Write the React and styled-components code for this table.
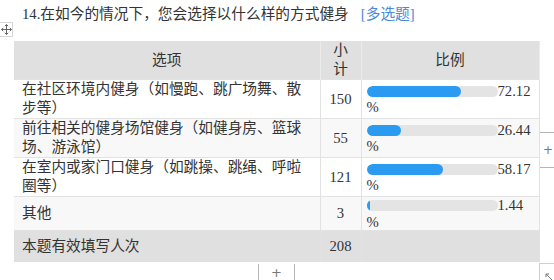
import React from 'react';
import styled, { createGlobalStyle } from 'styled-components';

const GlobalStyle = createGlobalStyle`
  body {
    margin: 0;
    background: #fff;
    font-family: "Liberation Serif", "Noto Sans CJK SC", serif;
    color: #333;
  }
`;

const Page = styled.div`
  width: 554px;
  height: 280px;
  overflow: hidden;
  position: relative;
`;

const Title = styled.div`
  margin: 4px 0 0 22px;
  font-size: 14.7px;
  line-height: 20px;
  color: #333;
  white-space: nowrap;
`;

const Tag = styled.span`
  margin-left: 12px;
  color: #4a88dc;
`;

const TableWrap = styled.div`
  position: relative;
  margin: 17px 0 0 14px;
  width: 525px;
`;

const Table = styled.table`
  width: 525px;
  table-layout: fixed;
  border-collapse: collapse;
  font-size: 14.7px;
`;

const HeadCell = styled.th`
  background: #e0e0e0;
  border-left: 1px solid #ebebeb;
  border-right: 1px solid #ebebeb;
  font-weight: normal;
  text-align: center;
  line-height: 19px;
  padding: 0 8px;
  height: 38px;
  color: #333;
  &:first-child { border-left: none; }
`;

const Row = styled.tr`
  background: ${p => (p.$total ? '#e0e0e0' : p.$striped ? '#f8f8f8' : '#fff')};
  border-top: 1px solid #e2e2e2;
`;

const Cell = styled.td`
  border-left: 1px solid #e2e2e2;
  border-right: 1px solid #e2e2e2;
  padding: ${p => (p.$bar ? '0 5px' : '0 8px')};
  text-align: ${p => (p.$center ? 'center' : 'left')};
  vertical-align: middle;
  line-height: 19px;
  height: ${p => (p.$short ? '31px' : '33px')};
  color: #333;
  &:first-child { border-left: none; }
`;

const BarLine = styled.div`
  line-height: 16.5px;
  white-space: nowrap;
`;

const Track = styled.span`
  display: inline-block;
  width: 131px;
  height: 11px;
  border-radius: 6px;
  background: #e4e4e4;
  vertical-align: middle;
  overflow: hidden;
  margin-top: -2px;
`;

const Fill = styled.span`
  display: block;
  height: 100%;
  min-width: 3px;
  border-radius: 6px;
  background: #2a9bf0;
`;

const Pct = styled.div`
  line-height: 16.5px;
`;

const MoveHandle = styled.div`
  position: absolute;
  left: -14px;
  top: -19px;
  width: 12px;
  height: 13px;
  border: 1px solid #d6d6d6;
  border-left: none;
  background: #fff;
  display: flex;
  align-items: center;
  justify-content: center;
`;

const SideTab = styled.div`
  position: absolute;
  left: 526px;
  top: 91px;
  width: 14px;
  height: 36px;
  border-top: 1px solid #b5b5b5;
  border-bottom: 1px solid #b5b5b5;
  background: #fff;
  color: #777;
  font-size: 12px;
  line-height: 12px;
  font-family: "DejaVu Sans", sans-serif;
  display: flex;
  align-items: center;
  padding-left: 3px;
  box-sizing: border-box;
`;

const BottomTab = styled.div`
  position: absolute;
  left: 244px;
  top: 223px;
  width: 35px;
  height: 16px;
  border-left: 1px solid #b5b5b5;
  border-right: 1px solid #b5b5b5;
  color: #777;
  font-size: 13px;
  line-height: 13px;
  font-family: "DejaVu Sans", sans-serif;
  display: flex;
  align-items: center;
  justify-content: center;
`;

const Corner = styled.div`
  position: absolute;
  left: 525px;
  top: 222px;
  width: 15px;
  height: 17px;
  border-left: 1px solid #d0d0d0;
  border-top: 1px solid #d0d0d0;
  background: #fff;
  padding: 3px 0 0 5px;
  box-sizing: border-box;
`;

const rows = [
  { label: '在社区环境内健身（如慢跑、跳广场舞、散步等）', count: 150, pct: '72.12' },
  { label: '前往相关的健身场馆健身（如健身房、篮球场、游泳馆）', count: 55, pct: '26.44' },
  { label: '在室内或家门口健身（如跳操、跳绳、呼啦圈等）', count: 121, pct: '58.17' },
  { label: '其他', count: 3, pct: '1.44' },
];

function MoveIcon() {
  return (
    <svg width="11" height="11" viewBox="0 0 11 11" fill="none" stroke="#666" strokeWidth="1">
      <path d="M5.5 0.5v10M0.5 5.5h10" />
      <path d="M3.8 2.2L5.5 0.5 7.2 2.2M3.8 8.8L5.5 10.5 7.2 8.8M2.2 3.8L0.5 5.5 2.2 7.2M8.8 3.8L10.5 5.5 8.8 7.2" />
    </svg>
  );
}

function ResizeIcon() {
  return (
    <svg width="8" height="8" viewBox="0 0 8 8" fill="none" stroke="#777" strokeWidth="1">
      <path d="M1 1L7 7" />
      <path d="M1 4V1h3" />
    </svg>
  );
}

export default function App() {
  return (
    <Page>
      <GlobalStyle />
      <Title>
        14.在如今的情况下，您会选择以什么样的方式健身
        <Tag>[多选题]</Tag>
      </Title>

      <TableWrap>
        <MoveHandle>
          <MoveIcon />
        </MoveHandle>

        <Table>
          <colgroup>
            <col style={{ width: 306 }} />
            <col style={{ width: 41 }} />
            <col style={{ width: 178 }} />
          </colgroup>
          <thead>
            <tr>
              <HeadCell>选项</HeadCell>
              <HeadCell>小计</HeadCell>
              <HeadCell>比例</HeadCell>
            </tr>
          </thead>
          <tbody>
            {rows.map((r, i) => (
              <Row key={r.label} $striped={i % 2 === 1}>
                <Cell>{r.label}</Cell>
                <Cell $center>{r.count}</Cell>
                <Cell $bar>
                  <BarLine>
                    <Track>
                      <Fill style={{ width: `${r.pct}%` }} />
                    </Track>
                    {r.pct}
                  </BarLine>
                  <Pct>%</Pct>
                </Cell>
              </Row>
            ))}
            <Row $total>
              <Cell $short>本题有效填写人次</Cell>
              <Cell $short $center>208</Cell>
              <Cell $short />
            </Row>
          </tbody>
        </Table>

        <SideTab>+</SideTab>
        <BottomTab>+</BottomTab>
        <Corner>
          <ResizeIcon />
        </Corner>
      </TableWrap>
    </Page>
  );
}
